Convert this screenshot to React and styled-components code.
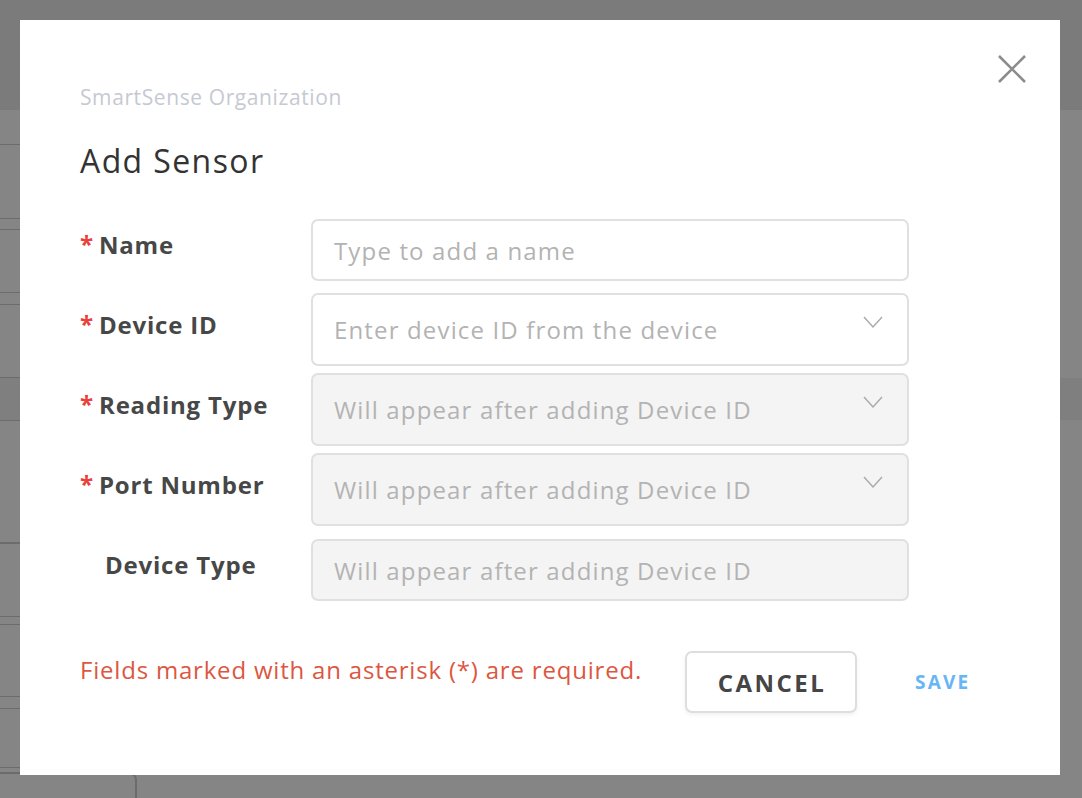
import React from 'react'
import styled, { createGlobalStyle } from 'styled-components'

const GlobalStyle = createGlobalStyle`
  html, body {
    margin: 0;
    padding: 0;
  }
  body {
    font-family: "Open Sans", Lato, sans-serif;
    background: #ffffff;
    overflow: hidden;
  }
  * { box-sizing: border-box; }
`

// page that sits behind the dialog
const Page = styled.div`
  height: 798px;
  display: flex;
  flex-direction: column;
  background: #ffffff;
`

const PageHeader = styled.div`
  height: 110px;
  flex-shrink: 0;
  background: #ececec;
`

const PageBody = styled.div`
  display: flex;
  flex-direction: column;
  padding-top: 34px;
`

const ListCard = styled.div`
  width: 520px;
  height: ${p => p.h}px;
  margin-bottom: ${p => p.gap || 0}px;
  border-top: 1px solid #d0d0d0;
  border-bottom: 1px solid #d0d0d0;
`

const SectionBand = styled.div`
  height: 42px;
  background: #f3f3f3;
`

const GhostButton = styled.div`
  width: 137px;
  height: 40px;
  margin-top: 4px;
  border: 2px solid #d0d0d0;
  border-left: none;
  border-radius: 0 8px 0 0;
`

// dialog
const Overlay = styled.div`
  position: fixed;
  inset: 0;
  background: rgba(0, 0, 0, 0.48);
  display: flex;
  justify-content: flex-start;
  align-items: flex-start;
  padding: 20px 0 0 20px;
`

const Modal = styled.div`
  position: relative;
  width: 1040px;
  height: 755px;
  background: #ffffff;
  padding: 65px 60px 0 60px;
`

const CloseButton = styled.button`
  position: absolute;
  top: 35px;
  right: 34px;
  width: 28px;
  height: 28px;
  padding: 0;
  border: none;
  background: transparent;
  cursor: pointer;
  svg { display: block; }
`

const OrgName = styled.div`
  font-size: 21px;
  line-height: 24px;
  letter-spacing: 0.6px;
  color: #c6c9d2;
`

const Title = styled.h2`
  margin: 34px 0 34px 0;
  font-size: 32px;
  line-height: 36px;
  letter-spacing: 1.4px;
  font-weight: 500;
  color: #333333;
`

const Form = styled.div`
  display: flex;
  flex-direction: column;
`

const Row = styled.div`
  display: grid;
  grid-template-columns: 231px 598px;
  height: 80px;
  align-items: start;
`

const Label = styled.div`
  padding-top: 19px;
  padding-left: ${p => (p.required ? 0 : 25)}px;
  font-size: 24px;
  line-height: 26px;
  letter-spacing: 0.8px;
  font-weight: 700;
  color: #474747;
  display: flex;
  align-items: flex-start;
`

const Star = styled.span`
  color: #e8403a;
  font-size: 24px;
  font-weight: 700;
  width: 19px;
  line-height: 24px;
  letter-spacing: 0;
`

const TextInput = styled.input`
  margin-top: ${p => (p.offset ? 6 : 0)}px;
  width: 100%;
  height: 62px;
  border: 2px solid #e0e0e0;
  border-radius: 7px;
  padding: 0 22px 0 21px;
  font-family: inherit;
  font-size: 24px;
  letter-spacing: 1.15px;
  color: #333;
  background: ${p => (p.disabled ? '#f4f4f4' : '#ffffff')};
  outline: none;
  &::placeholder {
    color: #b3b3b3;
  }
`

const Select = styled.div`
  width: 100%;
  height: 73px;
  border: 2px solid #e0e0e0;
  border-radius: 7px;
  padding: 0 24px 0 21px;
  background: ${p => (p.disabled ? '#f4f4f4' : '#ffffff')};
  display: flex;
  align-items: center;
  gap: 12px;
`

const SelectText = styled.span`
  flex: 1;
  font-size: 24px;
  letter-spacing: 1.15px;
  color: #b3b3b3;
`

const Chevron = styled.svg`
  align-self: flex-start;
  margin-top: 21px;
  flex-shrink: 0;
`

const Footer = styled.div`
  display: flex;
  align-items: flex-start;
  margin-top: 38px;
`

const ErrorText = styled.div`
  width: 605px;
  margin-top: 6px;
  font-size: 24px;
  line-height: 26px;
  letter-spacing: 0.8px;
  color: #dc5741;
`

const CancelButton = styled.button`
  width: 172px;
  height: 62px;
  border: 2px solid #dedede;
  border-radius: 7px;
  background: #ffffff;
  box-shadow: 0 2px 4px rgba(0, 0, 0, 0.06);
  padding: 0 0 0 2px;
  font-family: inherit;
  font-size: 24px;
  font-weight: 700;
  letter-spacing: 2.5px;
  color: #454545;
  cursor: pointer;
`

const SaveButton = styled.button`
  align-self: center;
  margin-left: 52px;
  padding: 6px;
  border: none;
  background: transparent;
  font-family: inherit;
  font-size: 19px;
  font-weight: 700;
  letter-spacing: 2.2px;
  color: #66b6f5;
  cursor: pointer;
`

const ChevronIcon = () => (
  <Chevron width="20" height="12" viewBox="0 0 20 12">
    <polyline points="1,1 10,11 19,1" fill="none" stroke="#a9a9a9" strokeWidth="1.4" />
  </Chevron>
)

const fields = [
  { label: 'Name', required: true, kind: 'input', placeholder: 'Type to add a name' },
  { label: 'Device ID', required: true, kind: 'select', placeholder: 'Enter device ID from the device' },
  { label: 'Reading Type', required: true, kind: 'select', disabled: true, placeholder: 'Will appear after adding Device ID' },
  { label: 'Port Number', required: true, kind: 'select', disabled: true, placeholder: 'Will appear after adding Device ID' },
  { label: 'Device Type', required: false, kind: 'input', disabled: true, placeholder: 'Will appear after adding Device ID' },
]

const App = () => {
  return (
    <>
      <GlobalStyle />
      <Page>
        <PageHeader />
        <PageBody>
          <ListCard h={75} gap={10} />
          <ListCard h={64} gap={11} />
          <ListCard h={74} gap={0} />
          <SectionBand />
          <ListCard h={123} gap={0} />
          <ListCard h={74} gap={7} />
          <ListCard h={73} gap={11} />
          <ListCard h={60} gap={0} />
          <GhostButton />
        </PageBody>
      </Page>

      <Overlay>
        <Modal>
          <CloseButton aria-label="Close">
            <svg width="28" height="28" viewBox="0 0 28 28">
              <path d="M1 1 L27 27 M27 1 L1 27" stroke="#8c8c8c" strokeWidth="2.6" fill="none" />
            </svg>
          </CloseButton>

          <OrgName>SmartSense Organization</OrgName>
          <Title>Add Sensor</Title>

          <Form>
            {fields.map(f => (
              <Row key={f.label}>
                <Label required={f.required}>
                  {f.required && <Star>*</Star>}
                  {f.label}
                </Label>
                {f.kind === 'input' ? (
                  <TextInput offset placeholder={f.placeholder} disabled={f.disabled} />
                ) : (
                  <Select disabled={f.disabled}>
                    <SelectText>{f.placeholder}</SelectText>
                    <ChevronIcon />
                  </Select>
                )}
              </Row>
            ))}
          </Form>

          <Footer>
            <ErrorText>Fields marked with an asterisk (*) are required.</ErrorText>
            <CancelButton>CANCEL</CancelButton>
            <SaveButton>SAVE</SaveButton>
          </Footer>
        </Modal>
      </Overlay>
    </>
  )
}

export default App
